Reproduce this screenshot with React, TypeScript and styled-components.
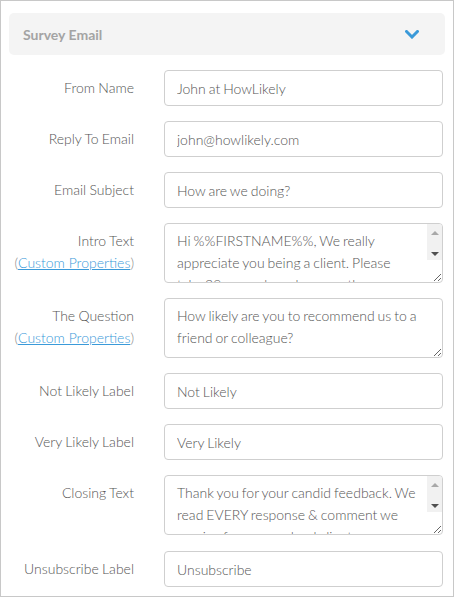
import React from "react";
import styled, { createGlobalStyle } from "styled-components";

const Global = createGlobalStyle`
  html, body { margin: 0; padding: 0; background: #fff; }
  body { font-family: Lato, "Open Sans", sans-serif; }
  * { box-sizing: border-box; }
`;

const Panel = styled.div`
  width: 454px;
  height: 597px;
  border: 1px solid #c8c8c8;
  padding: 12px 8px 0 8px;
  display: flex;
  flex-direction: column;
  overflow: hidden;
`;

const Header = styled.div`
  height: 42px;
  background: #f4f4f4;
  border-radius: 5px;
  display: flex;
  align-items: center;
  justify-content: space-between;
  padding: 0 26px 0 14px;
  margin-bottom: 15px;
`;

const HeaderTitle = styled.span`
  font-weight: 700;
  font-size: 14px;
  color: #a4a4a4;
`;

const Form = styled.div`
  display: flex;
  flex-direction: column;
  gap: 15px;
`;

const Row = styled.div<{ $extra?: number }>`
  display: flex;
  align-items: flex-start;
  gap: 30px;
  margin-top: ${(p) => p.$extra ?? 0}px;
`;

const Label = styled.label`
  width: 125px;
  flex: none;
  text-align: right;
  font-size: 14px;
  font-weight: 300;
  line-height: 22px;
  padding-top: 7px;
  color: #555;
  word-spacing: -0.5px;
`;

const Link = styled.a`
  color: #3a9ad9;
  text-decoration: underline;
  word-spacing: 0;
`;

const Paren = styled.span`
  color: #8a8a8a;
`;

const Input = styled.input`
  width: 279px;
  height: 36px;
  border: 1px solid #cfcfcf;
  border-radius: 4px;
  padding: 0 12px;
  font-family: Lato, "Open Sans", sans-serif;
  font-size: 14px;
  font-weight: 300;
  color: #555;
  background: #fff;
  outline: none;
  word-spacing: -0.8px;
`;

const AreaWrap = styled.div`
  position: relative;
  width: 279px;
  height: 60px;
`;

const Area = styled.textarea<{ $scroll?: boolean }>`
  width: 279px;
  height: 60px;
  border: 1px solid #cfcfcf;
  border-radius: 4px;
  padding: 6px ${(p) => (p.$scroll ? 24 : 12)}px 6px 12px;
  font-family: Lato, "Open Sans", sans-serif;
  font-size: 14px;
  font-weight: 300;
  line-height: 22px;
  color: #555;
  background: #fff;
  outline: none;
  resize: vertical;
  display: block;
  overflow: hidden;
  word-spacing: -0.8px;
`;

const ScrollBar = styled.div`
  position: absolute;
  top: 1px;
  right: 1px;
  width: 15px;
  height: 36px;
  background: #f1f1f1;
  border-top-right-radius: 3px;
  display: flex;
  flex-direction: column;
  justify-content: space-between;
  pointer-events: none;
`;

const ScrollButton = styled.div<{ $down?: boolean }>`
  height: 18px;
  display: flex;
  justify-content: center;
  align-items: ${(p) => (p.$down ? "flex-end" : "flex-start")};
  padding: ${(p) => (p.$down ? "0 0 4px" : "7px 0 0")};
`;

const Triangle = styled.span<{ $down?: boolean }>`
  width: 0;
  height: 0;
  border-left: 4px solid transparent;
  border-right: 4px solid transparent;
  ${(p) =>
    p.$down
      ? "border-top: 4px solid #4f4f4f;"
      : "border-bottom: 4px solid #a8a8a8;"}
`;

const Chevron = () => (
  <svg width="14" height="9" viewBox="0 0 14 9">
    <path d="M1.5 1.5 L7 7 L12.5 1.5" fill="none" stroke="#3a9ad9" strokeWidth="3" strokeLinecap="square" />
  </svg>
);

type Field = {
  label: string;
  value: string;
  area?: boolean;
  scroll?: boolean;
  custom?: boolean;
  extra?: number;
};

const fields: Field[] = [
  { label: "From Name", value: "John at HowLikely" },
  { label: "Reply To Email", value: "john@howlikely.com" },
  { label: "Email Subject", value: "How are we doing?" },
  {
    label: "Intro Text",
    value:
      "Hi %%FIRSTNAME%%, We really appreciate you being a client. Please take 30 seconds and answer the question below.",
    area: true,
    scroll: true,
    custom: true,
  },
  {
    label: "The Question",
    value: "How likely are you to recommend us to a friend or colleague?",
    area: true,
    custom: true,
  },
  { label: "Not Likely Label", value: "Not Likely" },
  { label: "Very Likely Label", value: "Very Likely" },
  {
    label: "Closing Text",
    value:
      "Thank you for your candid feedback. We read EVERY response & comment we receive from our valued clients.",
    area: true,
    scroll: true,
  },
  { label: "Unsubscribe Label", value: "Unsubscribe", extra: 1 },
];

export default function App() {
  return (
    <>
      <Global />
      <Panel>
        <Header>
          <HeaderTitle>Survey Email</HeaderTitle>
          <Chevron />
        </Header>
        <Form>
          {fields.map((f) => (
            <Row key={f.label} $extra={f.extra}>
              <Label>
                {f.label}
                {f.custom && (
                  <>
                    <br />
                    <Paren>(</Paren>
                    <Link href="#">Custom Properties</Link>
                    <Paren>)</Paren>
                  </>
                )}
              </Label>
              {f.area ? (
                <AreaWrap>
                  <Area $scroll={f.scroll} defaultValue={f.value} />
                  {f.scroll && (
                    <ScrollBar>
                      <ScrollButton>
                        <Triangle />
                      </ScrollButton>
                      <ScrollButton $down>
                        <Triangle $down />
                      </ScrollButton>
                    </ScrollBar>
                  )}
                </AreaWrap>
              ) : (
                <Input defaultValue={f.value} />
              )}
            </Row>
          ))}
        </Form>
      </Panel>
    </>
  );
}
